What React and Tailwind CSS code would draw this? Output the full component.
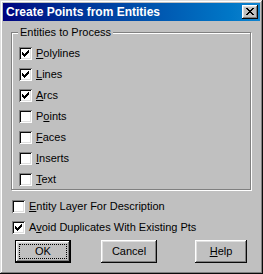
import React from "react";

const FONT = { fontFamily: '"Liberation Sans", Arial, sans-serif' };

const CHECK = ["......x", ".....xx", "x...xxx", "xx.xxx.", "xxxxx..", ".xxx...", "..x...."];
const CLOSE = ["xx....xx", ".xx..xx.", "..xxxx..", "...xx...", "..xxxx..", ".xx..xx.", "xx....xx"];

// pixel glyph, drawn 1:1 like the old bitmap resources
function Pixels({ rows, className }) {
  return (
    <svg
      width={rows[0].length}
      height={rows.length}
      shapeRendering="crispEdges"
      className={className}
    >
      {rows.flatMap((row, y) =>
        [...row].map((c, x) =>
          c === "x" ? <rect key={`${x}-${y}`} x={x} y={y} width="1" height="1" fill="#000" /> : null
        )
      )}
    </svg>
  );
}

function CheckBox({ checked, children }) {
  return (
    <div className="flex items-center gap-[4px] h-[13px]">
      <div className="w-[13px] h-[13px] shrink-0 bg-white flex items-center justify-center shadow-[inset_1px_1px_#808080,inset_-1px_-1px_#fff,inset_2px_2px_#0a0a0a,inset_-2px_-2px_#dfdfdf]">
        {checked && <Pixels rows={CHECK} />}
      </div>
      <span className="text-[11px] leading-[13px] text-black whitespace-nowrap">{children}</span>
    </div>
  );
}

const BEVEL =
  "shadow-[inset_-1px_-1px_#0a0a0a,inset_1px_1px_#fff,inset_-2px_-2px_#808080,inset_2px_2px_#dfdfdf]";

const entities = [
  { checked: true, label: <><u className="underline-offset-[1px]">P</u>olylines</> },
  { checked: true, label: <><u className="underline-offset-[1px]">L</u>ines</> },
  { checked: true, label: <><u className="underline-offset-[1px]">A</u>rcs</> },
  { checked: false, label: <>P<u className="underline-offset-[1px]">o</u>ints</> },
  { checked: false, label: <><u className="underline-offset-[1px]">F</u>aces</> },
  { checked: false, label: <><u className="underline-offset-[1px]">I</u>nserts</> },
  { checked: false, label: <><u className="underline-offset-[1px]">T</u>ext</> },
];

export default function App() {
  return (
    <div
      style={FONT}
      className="w-[263px] h-[274px] bg-[#c0c0c0] p-[3px] flex flex-col shadow-[inset_-1px_-1px_#0a0a0a,inset_1px_1px_#dfdfdf,inset_-2px_-2px_#808080,inset_2px_2px_#fff]"
    >
      <div className="h-[18px] flex items-center justify-between pl-[3px] pr-[2px] bg-gradient-to-r from-[#000080] to-[#1084d0]">
        <span className="text-white font-bold text-[12px] leading-[14px] whitespace-nowrap">
          Create Points from Entities
        </span>
        <button className={`w-[16px] h-[14px] bg-[#c0c0c0] flex items-start justify-start pl-[4px] pt-[3px] ${BEVEL}`}>
          <Pixels rows={CLOSE} />
        </button>
      </div>

      <div className="flex flex-col px-[8px]">
        <div className="relative mt-[11px] mr-[1px] border border-[#808080] shadow-[inset_1px_1px_#fff,1px_1px_#fff] pl-[7px] pt-[14px] pb-[3px] flex flex-col gap-[8px]">
          <span className="absolute -top-[7px] left-[6px] px-[2px] bg-[#c0c0c0] text-[11px] leading-[13px] text-black">
            Entities to Process
          </span>
          {entities.map((e, i) => (
            <CheckBox key={i} checked={e.checked}>
              {e.label}
            </CheckBox>
          ))}
        </div>

        <div className="mt-[10px] pl-[1px] flex flex-col gap-[8px]">
          <CheckBox checked={false}>
            <u className="underline-offset-[1px]">E</u>ntity Layer For Description
          </CheckBox>
          <CheckBox checked={true}>
            A<u className="underline-offset-[1px]">v</u>oid Duplicates With Existing Pts
          </CheckBox>
        </div>

        <div className="mt-[6px] flex items-center text-[11px] text-black">
          <button className="ml-[4px] w-[56px] h-[23px] border border-black bg-[#c0c0c0]">
            <div className={`relative w-full h-full flex items-center justify-center ${BEVEL}`}>
              <span className="absolute inset-[3px] border border-dotted border-black" />
              OK
            </div>
          </button>
          <button className={`ml-[30px] w-[56px] h-[23px] bg-[#c0c0c0] flex items-center justify-center ${BEVEL}`}>
            Cancel
          </button>
          <button className={`ml-[38px] w-[52px] h-[23px] bg-[#c0c0c0] flex items-center justify-center ${BEVEL}`}>
            <span>
              <u className="underline-offset-[1px]">H</u>elp
            </span>
          </button>
        </div>
      </div>
    </div>
  );
}
